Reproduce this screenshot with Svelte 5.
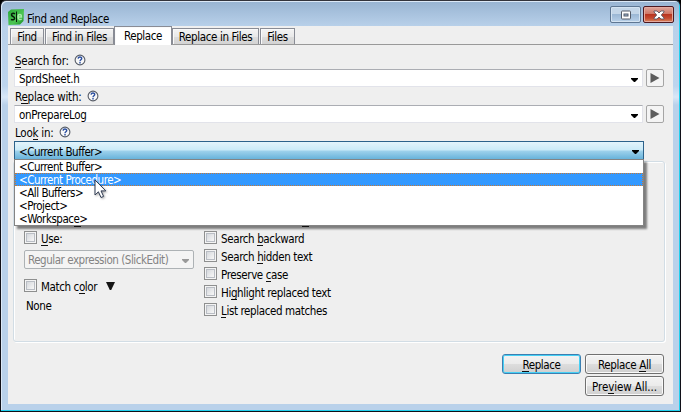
<script>
  const tabs = [
    { name: 'Find', w: 34 },
    { name: 'Find in Files', w: 69 },
    { name: 'Replace', w: 58, active: true },
    { name: 'Replace in Files', w: 87 },
    { name: 'Files', w: 35 },
  ];
  const scopes = ['<Current Buffer>', '<Current Procedure>', '<All Buffers>', '<Project>', '<Workspace>'];
  const options = [
    ['Search ', 'b', 'ackward'],
    ['Search ', 'h', 'idden text'],
    ['Preserve ', 'c', 'ase'],
    ['Hi', 'g', 'hlight replaced text'],
    ['', 'L', 'ist replaced matches'],
  ];
</script>

{#snippet help()}
  <svg class="help" width="12" height="12" viewBox="0 0 12 12">
    <circle cx="6" cy="6" r="4.9" fill="#f8f8f8" stroke="#555b66" stroke-width="1.1" />
    <path d="M4.1 4.6C4.2 2.5 7.8 2.5 7.7 4.5C7.7 5.8 6 5.7 6 7.2M6 8.1V9.4" fill="none" stroke="#2b4fa0" stroke-width="1.4" />
  </svg>
{/snippet}

{#snippet arrow()}
  <svg class="arrow" width="7" height="4" viewBox="0 0 7 4"><path d="M0 0H7V1L4 4H3L0 1Z" fill="currentColor" /></svg>
{/snippet}

{#snippet field(value)}
  <div class="fieldrow">
    <div class="field"><span>{value}</span>{@render arrow()}</div>
    <button class="play" aria-label="Expression menu">
      <svg width="10" height="10" viewBox="0 0 10 10"><path d="M.5 0L9.5 5L.5 10Z" fill="#5d5d5d" /></svg>
    </button>
  </div>
{/snippet}

<div class="window">
  <header>
    <svg class="logo" width="16" height="16" viewBox="0 0 16 16">
      <defs>
        <linearGradient id="leaf" x1="0" y1="0" x2="1" y2="1">
          <stop offset="0" stop-color="#2aa838" /><stop offset=".6" stop-color="#4cc552" /><stop offset="1" stop-color="#128a20" />
        </linearGradient>
      </defs>
      <path d="M0 3L3 .5L16 0L15.5 12L12 15.5L.5 16Z" fill="url(#leaf)" />
      <path d="M7 4.8C5 3.6 3.1 4.6 3.6 6.2C4 7.6 6.8 7.5 6.6 9.4C6.4 11 4.4 11.1 3 10.3" fill="none" stroke="#061b08" stroke-width="1.5" />
      <path d="M8.5 2.5V13" stroke="#061b08" />
      <path d="M10 8H13.5C13.5 4.7 10 4.7 10 8C10 11 12.5 11 13.7 10" fill="none" stroke="#a9eda9" stroke-width="1.4" />
    </svg>
    <span class="title">Find and Replace</span>
    <div class="controls">
      <button class="max" aria-label="Maximize">
        <svg width="12" height="10" viewBox="0 0 12 10"><rect x="1.5" y="1" width="9" height="8" rx=".8" fill="#fff" stroke="#545b68" /><rect x="4" y="4" width="4" height="2" fill="#9db8d5" stroke="#545b68" /></svg>
      </button>
      <button class="close" aria-label="Close">
        <svg width="12" height="10" viewBox="0 0 12 10"><path d="M1 1H4L6 3L8 1H11V2L8.3 5L11 8V9H8L6 7L4 9H1V8L3.7 5L1 2Z" fill="#fff" stroke="#5b5662" stroke-width=".9" /></svg>
      </button>
    </div>
  </header>

  <main>
    <nav>
      {#each tabs as tab}
        <div class="tab" class:active={tab.active} style:width="{tab.w}px">{tab.name}</div>
      {/each}
    </nav>

    <div class="label l1"><span><u>S</u>earch for:</span>{@render help()}</div>
    {@render field('SprdSheet.h')}
    <div class="label l2"><span>R<u>e</u>place with:</span>{@render help()}</div>
    {@render field('onPrepareLog')}
    <div class="label l3"><span>Loo<u>k</u> in:</span>{@render help()}</div>

    <div class="combo">
      <span>&lt;Current Buffer&gt;</span>{@render arrow()}
      <div class="menu">
        {#each scopes as s, i}
          <div class="item" class:hot={i === 1}>{s}</div>
        {/each}
        <svg class="cursor" width="13" height="20" viewBox="0 0 13 20">
          <path d="M1 1V16L4.4 12.8L7 18.5L9.6 17.4L7 11.9H11.8Z" fill="#fff" stroke="#2e3a52" stroke-width="1" />
        </svg>
        <i class="peek a"></i><i class="peek b"></i>
      </div>
    </div>

    <section>
      <div class="left">
        <div class="check"><i></i><span><u>U</u>se:</span></div>
        <div class="select"><span>Regular expression (SlickEdit)</span>{@render arrow()}</div>
        <div class="check color"><i></i><span>Match c<u>o</u>lor</span>
          <svg width="9" height="8" viewBox="0 0 9 8"><path d="M0 0H9L5.2 8H3.8Z" fill="#151515" /></svg>
        </div>
        <div class="none">None</div>
      </div>
      <div class="right">
        {#each options as [pre, key, post]}
          <div class="check"><i></i><span>{pre}<u>{key}</u>{post}</span></div>
        {/each}
      </div>
    </section>

    <footer>
      <button class="btn default"><span><u>R</u>eplace</span></button>
      <button class="btn"><span>Replace <u>A</u>ll</span></button>
      <button class="btn preview"><span>Pre<u>v</u>iew All...</span></button>
    </footer>
  </main>
</div>

<style>
  :global(body) { background: #000; overflow: hidden; }
  .window, .window :global(*) { box-sizing: border-box; }
  .window {
    width: 681px; height: 412px; padding: 1px 6px 6px 7px;
    background: linear-gradient(#98b4d2, #b9d1ea 26px, #bdd5ee 85px, #d8e7f7 96px, #b9d1ea 104px);
    border: 1px solid #101018; border-top-color: #33343c; border-radius: 6px 6px 0 0;
    box-shadow: inset -1px -1px #20d0ee, inset 1px 1px #dce9f7;
    font: 11.5px/14px "DejaVu Sans Condensed", "DejaVu Sans", sans-serif; font-stretch: condensed;
    color: #000; letter-spacing: -0.38px; white-space: nowrap;
  }
  button { padding: 0; font: inherit; letter-spacing: inherit; color: inherit; }
  u { text-decoration: none; box-shadow: 0 -1px 0 #111 inset; }
  header { height: 24px; display: flex; padding-top: 7px; }
  .logo { flex: none; }
  .title { margin: 3px 0 0 3px; flex: 1; }
  .controls { display: flex; gap: 2px; margin-top: -3px; height: 17px; }
  .controls button { width: 31px; height: 17px; border-radius: 2px; display: flex; justify-content: center; align-items: center; }
  .max { border: 1px solid #5e7692; background: linear-gradient(#c4d6e8 0 48%, #9cb8d5 50%, #b8d0e8); box-shadow: inset 0 0 0 1px #d4e3f1; }
  .close { border: 1px solid #4d1820; background: linear-gradient(#dea79d, #cf7565 46%, #b83420 50%, #c54b32 75%, #d98a60); box-shadow: inset 0 0 0 1px #e5aa9f; }
  main { width: 665px; height: 378px; background: #efefef; }
  nav { height: 19px; padding: 2px 0 0 2px; display: flex; align-items: flex-end; gap: 1px; border-bottom: 1px solid #999; }
  .tab { height: 16px; flex: none; border: 1px solid #898c95; border-bottom: 0; text-align: center; line-height: 17px; background: linear-gradient(#f3f3f3, #e9e9e9 50%, #dcdcdc 55%, #d3d3d3); box-shadow: inset 1px 1px #fafafa; }
  .tab.active { height: 19px; margin: 0 -1px -1px; line-height: 18px; background: #fff; }
  .label { display: flex; gap: 5px; padding-left: 7px; height: 14px; align-items: flex-start; letter-spacing: -0.24px; }
  .l1 { margin: 9px 0 1px; }
  .l2 { margin: 3px 0 1px; }
  .l3 { margin: 3px 0 1px; }
  .fieldrow { display: flex; gap: 3px; padding-left: 6px; height: 18px; }
  .field { width: 629px; height: 18px; background: #fff; border: 1px solid #e2e3ea; border-top-color: #abadb3; display: flex; align-items: center; justify-content: space-between; padding: 2px 4px 0 4px; letter-spacing: -0.28px; }
  .window :global(.arrow) { flex: none; margin-top: 1px; color: #000; }
  .play { width: 18px; height: 18px; border: 1px solid #a5a5a5; border-radius: 2px; background: #f4f4f4; display: flex; align-items: center; justify-content: center; }
  .combo { position: relative; z-index: 2; margin-left: 6px; width: 630px; height: 19px; border: 1px solid #2c628b; display: flex; align-items: center; justify-content: space-between; padding: 2px 4px 0 4px; letter-spacing: -0.48px; background: linear-gradient(#e3f4fc, #c9eaf8 48%, #9fd2ec 52%, #68b3db); }
  .menu { position: absolute; left: -1px; top: 17px; width: 630px; height: 67px; border: 1px solid #848484; background: #fff; box-shadow: 3px 3px 2px rgba(0,0,0,.48); }
  .item { height: 13px; line-height: 15px; padding-left: 4px; }
  .hot { color: #fff; background: #3399ff; outline: 1px dotted #c77936; outline-offset: -1px; }
  .cursor { position: absolute; left: 79px; top: 19px; filter: drop-shadow(1px 1px 1px #0005); }
  .peek { position: absolute; height: 1px; top: 66px; width: 7px; background: #111; }
  .peek.a { left: 59px; }
  .peek.b { left: 287px; }
  section { margin: 1px 8px 0 5px; height: 181px; border: 1px solid #d2dde5; border-radius: 3px; box-shadow: inset 1px 1px #fff, 1px 1px #fff; display: flex; padding: 69px 0 0 10px; }
  .left { width: 180px; }
  .check { height: 18px; display: flex; gap: 4px; }
  .check i { flex: none; width: 13px; height: 13px; border: 1px solid #8e8f8f; background: linear-gradient(135deg, #cbcfd5, #f4f4f4 75%); box-shadow: inset 0 0 0 1px #f4f4f4, inset 0 0 0 2px #b9bdc4; }
  .check span { margin-top: 1px; height: 14px; }
  .select { margin-top: 1px; width: 170px; height: 19px; border: 1px solid #adb2b5; border-radius: 2px; background: #f4f4f4; color: #838383; padding: 1px 4px 0 3px; display: flex; align-items: center; justify-content: space-between; letter-spacing: -0.46px; }
  .select :global(.arrow) { color: #999; }
  .color { margin-top: 10px; }
  .color svg { margin: 3px 0 0 5px; }
  .none { margin: 2px 0 0 2px; }
  footer { display: flex; flex-wrap: wrap; justify-content: flex-end; gap: 2px 4px; padding: 12px 9px 0 480px; }
  .btn { width: 79px; height: 20px; border: 1px solid #707070; border-radius: 3px; background: linear-gradient(#f3f3f3, #ebebeb 48%, #dddddd 52%, #cfcfcf); box-shadow: inset 0 0 0 1px #fafafa; display: flex; align-items: center; justify-content: center; padding-top: 1px; }
  .preview { letter-spacing: -0.1px; }
  .default { border-color: #3c7fb1; box-shadow: inset 0 0 0 1px #46d0f5; }
</style>
